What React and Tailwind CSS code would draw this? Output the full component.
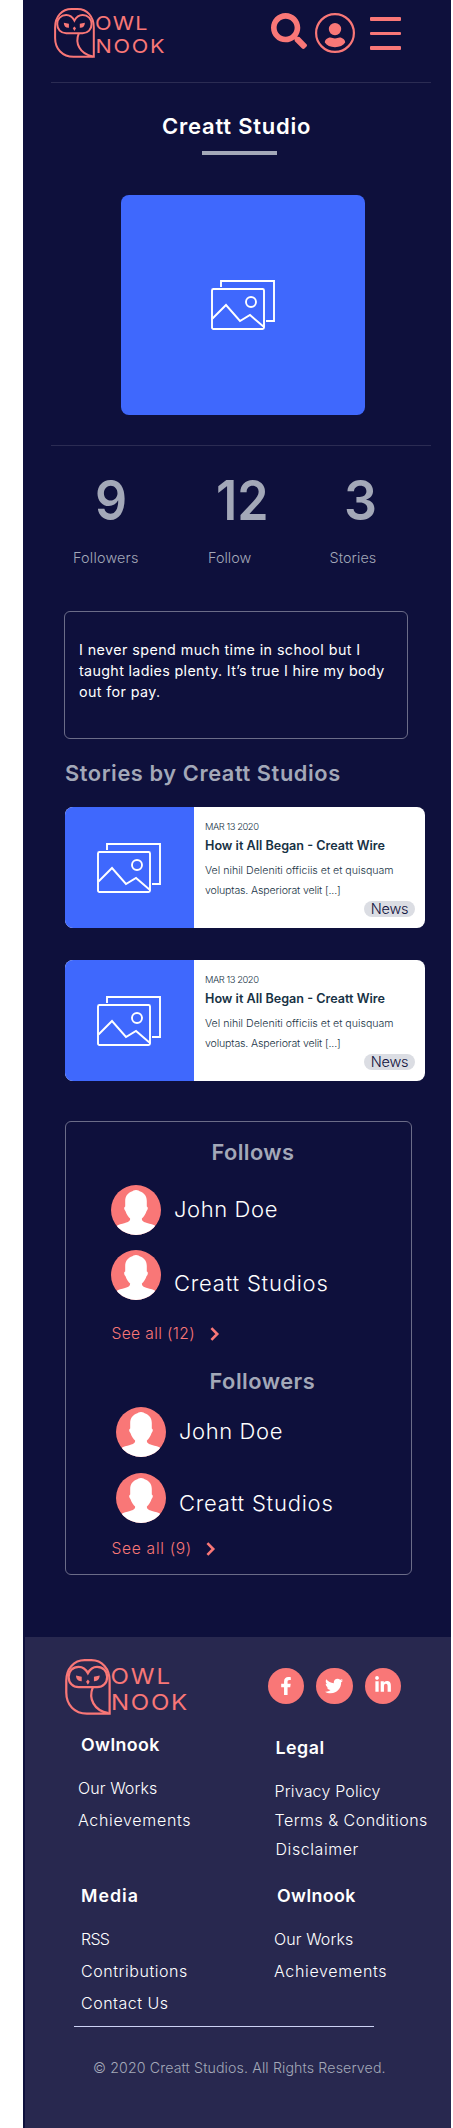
import React from "react";
import { FaSearch, FaFacebookF, FaTwitter, FaLinkedinIn } from "react-icons/fa";

function OwlMark({ className }) {
  return (
    <svg viewBox="0 0 41 50" className={className} fill="none" stroke="#f97777" strokeWidth="2">
      <path d="M39.8 48.8V19.5C39.8 8.5 33 1.1 23.5 1.1H17.5C8 1.1 1.1 8.5 1.1 19.5V30C1.1 41 8.5 48.8 19.5 48.8Z" />
      <path d="M20.4 12.6C18.6 9.2 15.6 7 12.2 7C6.8 7 3.2 11 3.2 16C3.2 21.3 6.8 25.2 12.2 25.2H28.6C34 25.2 37.6 21.3 37.6 16C37.6 11 34 7 28.6 7C25.2 7 22.2 9.2 20.4 12.6Z" />
      <path d="M24.8 25.3C20.8 35 25.5 46 38.8 48.4" />
      <path d="M9.8 14.8L14.9 15.8V19.8C11.6 20 9.8 18 9.8 14.8ZM30.9 14.8L25.8 15.8V19.8C29.1 20 30.9 18 30.9 14.8Z" fill="#f97777" stroke="none" />
      <path d="M20.4 18.4L22 20.3L20.4 23L18.8 20.3Z" fill="#f97777" stroke="none" />
    </svg>
  );
}

function UserIcon() {
  return (
    <svg viewBox="0 0 40 40" className="h-10 w-10" fill="#f97777">
      <circle cx="20" cy="20" r="18.9" fill="none" stroke="#f97777" strokeWidth="2.2" />
      <circle cx="20" cy="16.1" r="6.2" />
      <path d="M9.8 29.6C9.8 27 12.4 24.6 15.4 24.6C17.2 24.6 18 25.6 20 25.6C22 25.6 22.8 24.6 24.6 24.6C27.6 24.6 30.2 27 30.2 29.6C28.2 32.6 24.6 34.2 20 34.2C15.4 34.2 11.8 32.6 9.8 29.6Z" />
    </svg>
  );
}

function PhotosIcon() {
  return (
    <svg viewBox="0 0 64 50" className="h-[50px] w-16" fill="none" stroke="#fff" strokeWidth="1.9">
      <path d="M10 7V1H63V41H55" />
      <rect x="1" y="9" width="52" height="40" rx="1.5" />
      <circle cx="40" cy="22" r="5" />
      <path d="M1.5 38.5L15 25L29 41L39 35L53 47" />
    </svg>
  );
}

function Avatar() {
  return (
    <svg viewBox="0 0 50 50" className="h-[50px] w-[50px] shrink-0 rounded-full bg-[#f97777]" fill="#fff">
      <path d="M25 5C27 5 28 6 30 6.8C34 8.6 35.8 12 35.8 16V21.5C37.4 22 37 24.6 35.6 26C34.4 29.6 32.6 32 30.9 33.6C30.6 36 32.6 37 36 38C39.6 39 42.4 39.6 44.6 41V50H5.4V41C7.6 39.6 10.4 39 14 38C17.4 37 19.4 36 19.1 33.6C17.4 32 15.6 29.6 14.4 26C13 24.6 12.6 22 14.2 21.5V16C14.2 12 16 8.6 20 6.8C22 6 23 5 25 5Z" />
    </svg>
  );
}

function Chevron() {
  return (
    <svg viewBox="0 0 10 14" className="h-[14px] w-[10px]" fill="none" stroke="#f97777" strokeWidth="2.6">
      <path d="M1.4 1.2L7.2 7L1.4 12.8" />
    </svg>
  );
}

function StoryCard() {
  return (
    <article className="ml-[42px] flex h-[121px] w-[359.5px] overflow-hidden rounded-lg bg-white">
      <div className="flex w-[128.5px] shrink-0 items-center justify-center bg-[#3f68fd]">
        <PhotosIcon />
      </div>
      <div className="flex grow flex-col pt-3 pl-[11.5px] whitespace-nowrap text-[#173244]">
        <p className="h-4 text-[9.4px] leading-4 font-light tracking-[-0.45px]">MAR 13 2020</p>
        <h3 className="mt-px h-5 text-[12.6px] leading-5 font-semibold">How it All Began - Creatt Wire</h3>
        <p className="mt-[5px] h-5 text-[10.6px] leading-5 font-light">Vel nihil Deleniti officiis et et quisquam</p>
        <p className="h-5 text-[10.6px] leading-5 font-light tracking-[-0.15px]">voluptas. Asperiorat velit [...]</p>
        <span className="mr-[9.5px] flex h-4 w-[51px] items-center justify-center self-end rounded-full bg-[#dbdde3] text-[14.5px] leading-4 font-light tracking-[-0.2px] text-[#0e103c]">
          News
        </span>
      </div>
    </article>
  );
}

function Header() {
  return (
    <header className="ml-7 flex h-[83px] w-[380px] justify-between border-b border-[#2b2c53]">
      <div className="flex pt-2 pl-[3px]">
        <OwlMark className="h-[50px] w-[41px]" />
        <div className="origin-left scale-x-[1.12] pt-[3.5px] text-[19.3px] leading-[23.4px] font-normal text-[#f97777]">
          <div className="tracking-[1.1px]">OWL</div>
          <div className="pl-[0.5px] tracking-[1.5px]">NOOK</div>
        </div>
      </div>
      <div className="flex pt-[13px] pr-[30px]">
        <FaSearch className="h-9 w-9 text-[#f97777]" />
        <div className="ml-2">
          <UserIcon />
        </div>
        <div className="mt-1 ml-[15px] flex h-[33px] w-[31px] flex-col justify-between">
          <div className="h-[3.6px] rounded-[1px] bg-[#f97777]" />
          <div className="h-[3.6px] rounded-[1px] bg-[#f97777]" />
          <div className="h-[3.6px] rounded-[1px] bg-[#f97777]" />
        </div>
      </div>
    </header>
  );
}

function Profile() {
  return (
    <section>
      <h1 className="mt-[30px] pl-[139px] text-[22px] leading-[26px] font-semibold tracking-[0.78px] text-white">Creatt Studio</h1>
      <div className="mt-3 ml-[179px] h-1 w-[75px] bg-[#a3a8b8]" />
      <div className="mt-10 ml-[98px] flex h-[220px] w-[244px] items-center justify-center rounded-lg bg-[#3f68fd]">
        <PhotosIcon />
      </div>
      <div className="mx-7 mt-[30px] h-px w-[380px] bg-[#2b2c53]" />
      <div className="mt-[29px] flex h-[50px] text-[54.6px] leading-[50px] font-semibold text-[#a3a8b8]">
        <div className="w-[121px] pl-[72px]"><span className="inline-block origin-left scale-x-[0.92]">9</span></div>
        <div className="w-[126px] pl-[72px]"><span className="inline-block origin-left scale-x-[0.92]">12</span></div>
        <div className="pl-[74px]"><span className="inline-block origin-left scale-x-[0.95]">3</span></div>
      </div>
      <div className="mt-[23px] flex h-5 text-[14.4px] leading-5 font-light text-[#a3a8b8]">
        <div className="w-[135px] pl-[50px] tracking-[0.2px]">Followers</div>
        <div className="w-[122px] pl-[50px]">Follow</div>
        <div className="pl-[49.5px] tracking-[0.09px]">Stories</div>
      </div>
      <div className="mt-[43px] ml-[41px] h-[128px] w-[344px] rounded-md border border-[#6b6c88] pt-[27px] pl-[14px] text-[14.3px] leading-[21px] whitespace-nowrap text-white">
        <p className="tracking-[0.43px]">I never spend much time in school but I</p>
        <p className="tracking-[0.34px]">taught ladies plenty. It’s true I hire my body</p>
        <p className="tracking-[0.4px]">out for pay.</p>
      </div>
    </section>
  );
}

function Person({ name, className, nameClass }) {
  return (
    <div className={"flex h-[50px] " + className}>
      <Avatar />
      <span className={"ml-[13px] h-6 text-[22px] leading-6 font-light text-white " + nameClass}>{name}</span>
    </div>
  );
}

function Network() {
  return (
    <section className="mt-10 ml-[42px] h-[454px] w-[347px] rounded-md border border-[#6b6c88] whitespace-nowrap">
      <h2 className="mt-[16.5px] h-[26px] pl-[145.5px] text-[21.8px] leading-[26px] font-semibold tracking-[0.42px] text-[#a3a8b8]">Follows</h2>
      <Person name="John Doe" className="mt-[20.5px] pl-[45px]" nameClass="mt-[11.5px] tracking-[0.6px]" />
      <Person name="Creatt Studios" className="mt-[15px] pl-[45px]" nameClass="mt-[20.5px] tracking-[0.78px]" />
      <a className="mt-[23.5px] flex h-5 items-center pl-[45.5px] text-[15.6px] leading-5 font-light text-[#f97777]">
        <span className="w-[98.5px] tracking-[0.36px]">See all (12)</span>
        <Chevron />
      </a>
      <h2 className="mt-[24.5px] h-[26px] pl-[143.5px] text-[21.8px] leading-[26px] font-semibold tracking-[0.5px] text-[#a3a8b8]">Followers</h2>
      <Person name="John Doe" className="mt-[13px] pl-[50px]" nameClass="mt-[12px] tracking-[0.6px]" />
      <Person name="Creatt Studios" className="mt-4 pl-[50px]" nameClass="mt-[17.5px] tracking-[0.78px]" />
      <a className="mt-[15.5px] flex h-5 items-center pl-[45.5px] text-[15.6px] leading-5 font-light text-[#f97777]">
        <span className="w-[94.5px] tracking-[0.7px]">See all (9)</span>
        <Chevron />
      </a>
    </section>
  );
}

function Footer() {
  return (
    <footer className="mt-[62px] ml-0.5 h-[491px] bg-[#28284f] whitespace-nowrap text-white">
      <div className="flex h-[90px] justify-between pt-[21.5px] pr-[50px] pl-10">
        <div className="flex">
          <OwlMark className="h-[56px] w-[46px]" />
          <div className="origin-left scale-x-[1.12] pt-[4px] text-[21.5px] leading-[26.2px] font-normal text-[#f97777]">
            <div className="-ml-[0.5px] tracking-[1.7px]">OWL</div>
            <div className="tracking-[1.5px]">NOOK</div>
          </div>
        </div>
        <div className="flex gap-3 pt-[9.5px]">
          <span className="flex h-9 w-[36.5px] items-center justify-center rounded-full bg-[#f97777]"><FaFacebookF className="h-[18px] w-[18px]" /></span>
          <span className="flex h-9 w-[36.5px] items-center justify-center rounded-full bg-[#f97777]"><FaTwitter className="h-[18px] w-[18px]" /></span>
          <span className="flex h-9 w-[36.5px] items-center justify-center rounded-full bg-[#f97777]"><FaLinkedinIn className="mb-0.5 h-[18px] w-[18px]" /></span>
        </div>
      </div>
      <div className="flex h-[157px] text-[16px] leading-5 font-light">
        <div className="w-[197px] pl-[53px]">
          <h3 className="mt-2 pl-[3px] text-[17.8px] font-semibold tracking-[0.4px]">Owlnook</h3>
          <p className="mt-[23.3px] tracking-[0.08px]">Our Works</p>
          <p className="mt-[12px] tracking-[0.67px]">Achievements</p>
        </div>
        <div className="pl-[52.5px]">
          <h3 className="mt-[10.7px] pl-[1px] text-[17.8px] font-semibold tracking-[0.5px]">Legal</h3>
          <p className="mt-[23.6px] tracking-[0.17px]">Privacy Policy</p>
          <p className="mt-[9px] tracking-[0.47px]">Terms &amp; Conditions</p>
          <p className="mt-[9px] pl-[1px] tracking-[0.57px]">Disclaimer</p>
        </div>
      </div>
      <div className="flex h-[142px] text-[16px] leading-5 font-light">
        <div className="w-[197px] pl-[56px]">
          <h3 className="mt-[1.7px] text-[17.8px] font-semibold tracking-[1px]">Media</h3>
          <p className="mt-[23.3px] tracking-[-0.7px]">RSS</p>
          <p className="mt-3 tracking-[0.55px]">Contributions</p>
          <p className="mt-3 tracking-[0.5px]">Contact Us</p>
        </div>
        <div className="pl-[52px]">
          <h3 className="mt-[1.7px] pl-[3px] text-[17.8px] font-semibold tracking-[0.4px]">Owlnook</h3>
          <p className="mt-[23.3px] tracking-[0.08px]">Our Works</p>
          <p className="mt-3 tracking-[0.67px]">Achievements</p>
        </div>
      </div>
      <div className="ml-[49px] h-px w-[300px] bg-[#cdd3f5]" />
      <p className="mt-[30.5px] pl-[68px] text-[14.2px] leading-5 font-light tracking-[0.12px] text-[#a3a8b8]">
        © 2020 Creatt Studios. All Rights Reserved.
      </p>
    </footer>
  );
}

export default function App() {
  return (
    <div className="h-[2128px] w-[453px] overflow-hidden bg-white pl-[23px] font-['Inter',sans-serif]">
      <main className="flex h-full w-[428px] flex-col bg-[#0e103c]">
        <Header />
        <Profile />
        <h2 className="mt-[21px] mb-[21px] pl-[42px] text-[21.8px] leading-[26px] font-semibold tracking-[0.58px] text-[#a3a8b8]">
          Stories by Creatt Studios
        </h2>
        <div className="flex flex-col gap-8">
          <StoryCard />
          <StoryCard />
        </div>
        <Network />
        <Footer />
      </main>
    </div>
  );
}
